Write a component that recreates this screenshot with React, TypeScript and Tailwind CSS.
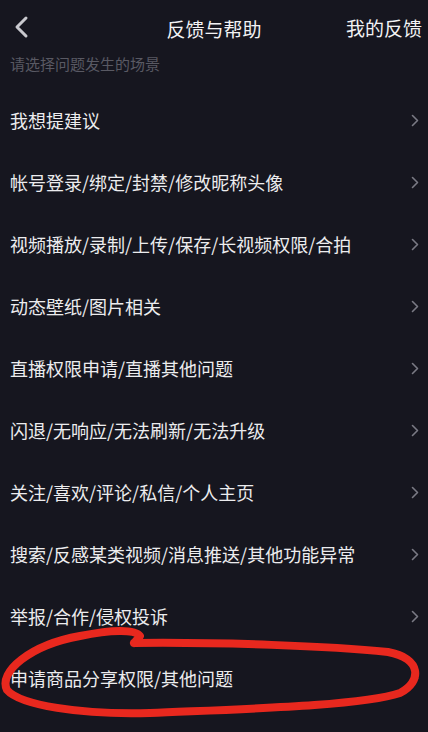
const items = [
  "我想提建议",
  "帐号登录/绑定/封禁/修改昵称头像",
  "视频播放/录制/上传/保存/长视频权限/合拍",
  "动态壁纸/图片相关",
  "直播权限申请/直播其他问题",
  "闪退/无响应/无法刷新/无法升级",
  "关注/喜欢/评论/私信/个人主页",
  "搜索/反感某类视频/消息推送/其他功能异常",
  "举报/合作/侵权投诉",
  "申请商品分享权限/其他问题",
  "其他问题",
];

function Chevron() {
  return (
    <svg width="8" height="13" viewBox="0 0 8 13" className="shrink-0">
      <path d="M1.5 1.5 L6.5 6.5 L1.5 11.5" fill="none" stroke="#7a7a84" strokeWidth="1.6" strokeLinecap="round" strokeLinejoin="round" />
    </svg>
  );
}

export default function App() {
  return (
    <div
      className="relative w-[428px] h-[732px] overflow-hidden bg-[#16161f] text-[#ececee]"
      style={{ fontFamily: '"Noto Sans CJK SC", "Noto Sans", sans-serif' }}
    >
      <header className="relative h-[56px] flex items-center justify-center">
        <svg width="16" height="24" viewBox="0 0 16 24" className="absolute left-[13px] top-[15px]">
          <path d="M13 3 L4 12 L13 21" fill="none" stroke="#c9c9ce" strokeWidth="3" strokeLinecap="round" strokeLinejoin="round" />
        </svg>
        <h1 className="text-[19px] leading-none text-[#f2f2f4]">反馈与帮助</h1>
        <span className="absolute right-[6px] top-[18px] text-[19px] leading-none text-[#f2f2f4]">我的反馈</span>
      </header>
      <p className="px-[10px] h-[16px] leading-[16px] text-[15px] text-[#595963]">请选择问题发生的场景</p>
      <ul className="mt-[17px]">
        {items.map((t) => (
          <li key={t} className="h-[62px] flex items-center justify-between pl-[10px] pr-[9px]">
            <span className="text-[18px] leading-none">{t}</span>
            <Chevron />
          </li>
        ))}
      </ul>
      <svg width="428" height="732" viewBox="0 0 428 732" className="absolute left-0 top-0 pointer-events-none">
        <path
          d="M134 643 C 220 642, 330 646, 388 652 C 422 658, 422 682, 400 693 C 362 706, 240 709, 150 713 C 80 715, 20 705, 7 690 C -2 672, 30 645, 80 636 C 110 630, 135 629, 140 636 L 134 643"
          fill="none"
          stroke="#e8281e"
          strokeWidth="8"
          strokeLinecap="round"
          strokeLinejoin="round"
        />
      </svg>
    </div>
  );
}
